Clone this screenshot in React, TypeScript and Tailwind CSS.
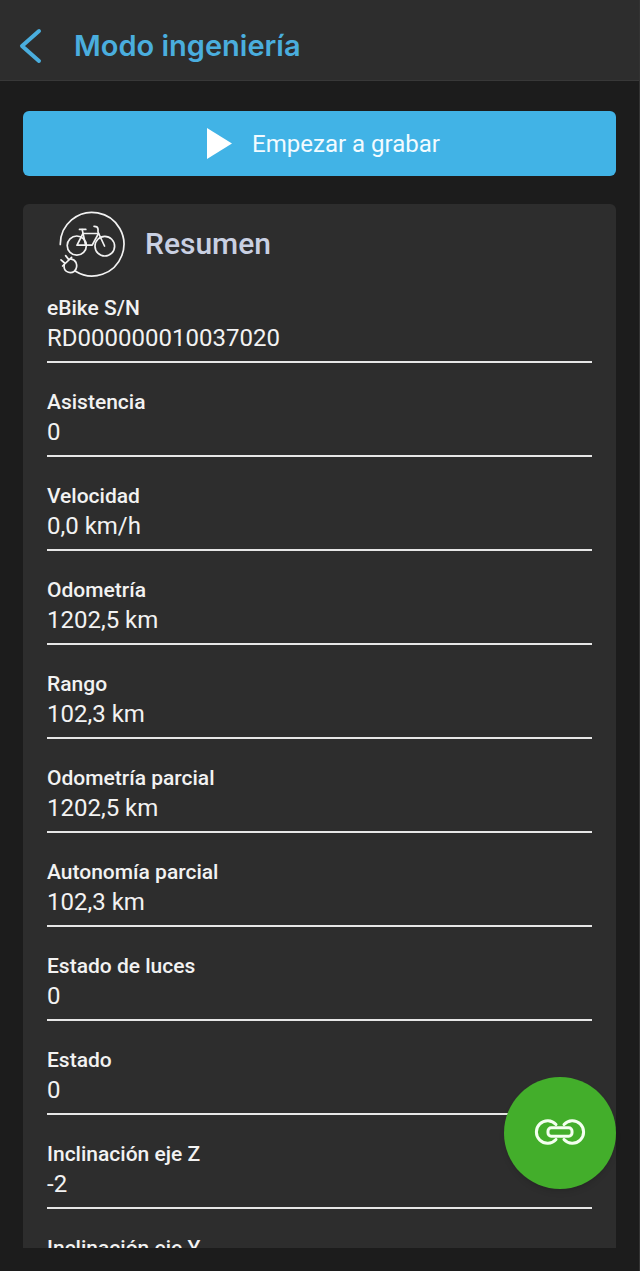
import { useState } from 'react'

interface Reading {
  label: string
  value?: string
}

const READINGS: Reading[] = [
  { label: 'eBike S/N', value: 'RD000000010037020' },
  { label: 'Asistencia', value: '0' },
  { label: 'Velocidad', value: '0,0 km/h' },
  { label: 'Odometría', value: '1202,5 km' },
  { label: 'Rango', value: '102,3 km' },
  { label: 'Odometría parcial', value: '1202,5 km' },
  { label: 'Autonomía parcial', value: '102,3 km' },
  { label: 'Estado de luces', value: '0' },
  { label: 'Estado', value: '0' },
  { label: 'Inclinación eje Z', value: '-2' },
  { label: 'Inclinación eje Y' },
]

function BackIcon() {
  return (
    <svg width="24" height="36" viewBox="0 0 24 36" fill="none" stroke="currentColor" strokeWidth="4" strokeLinecap="round" strokeLinejoin="round" aria-hidden="true">
      <path d="M21 3 L4 18 L21 33" />
    </svg>
  )
}

function BikeIcon() {
  return (
    <svg width="66" height="66" viewBox="9 6 66 66" fill="none" stroke="#f2f2f2" strokeWidth="1.7" strokeLinecap="round" strokeLinejoin="round" aria-hidden="true">
      {/* cable loop */}
      <path d="M10.3 39.5 A31.8 31.8 0 1 1 25.5 66.3" />
      {/* wheels */}
      <circle cx="26.8" cy="40.6" r="9.6" />
      <circle cx="54.8" cy="41.2" r="9.8" />
      {/* frame */}
      <path d="M27 40.2 L33 28.5 H48.5 L42.2 40.2 Z" />
      <path d="M29.5 24.4 H35.8" />
      <path d="M32.2 24.6 L35.6 40" />
      <path d="M44 21.3 Q47.8 21.2 48 24 L48 27 L54.5 41" />
      {/* plug */}
      <path d="M12.6 61 L21.6 52.4" />
      <path d="M14.2 59.8 Q13.5 64.2 16.5 66.4 Q20.5 69 24.4 66.2 Q28 62.5 26 57.5 Q24.4 54.4 20.5 53.8" />
      <path d="M11 54.8 L14.6 58" />
      <path d="M15.6 50.6 L18.6 54.4" />
    </svg>
  )
}

function LinkIcon() {
  return (
    <svg width="52" height="28" viewBox="-1 -1 52 28" fill="none" stroke="#f4fff0" strokeWidth="3" strokeLinecap="round" strokeLinejoin="round" aria-hidden="true">
      <path d="M21 4.6 A11.2 11.2 0 1 0 21 19.4" />
      <path d="M29 4.6 A11.2 11.2 0 1 1 29 19.4" />
      <rect x="13" y="7.8" width="24" height="8.4" rx="3.2" />
    </svg>
  )
}

export default function App() {
  const [recording, setRecording] = useState(false)

  return (
    <div className="flex h-screen flex-col border-r border-[#333333] bg-[#1c1c1c] text-[#f2f2f2]" style={{ fontFamily: 'Roboto, "Liberation Sans", sans-serif' }}>
      <header className="flex shrink-0 items-center gap-8 border-b border-[#383838] bg-[#2d2d2d] px-[18px] pt-4 pb-1 text-[#4aaede]">
        <button type="button" aria-label="Atrás" className="flex h-15 items-center">
          <BackIcon />
        </button>
        <h1 className="text-[29px] leading-10 font-semibold" style={{ fontFamily: 'Inter, "Liberation Sans", sans-serif' }}>Modo ingeniería</h1>
      </header>

      <main className="flex min-h-0 flex-1 flex-col gap-7 px-[23px] pt-[30px] pb-[23px]">
        <button
          type="button"
          aria-pressed={recording}
          onClick={() => setRecording(r => !r)}
          className="flex h-[65px] w-full shrink-0 items-center justify-center gap-5 rounded-md bg-[#41b3e6] pl-2 text-2xl text-[#f2fbff]"
        >
          <svg width="25" height="31" viewBox="0 0 25 31" fill="#ffffff" aria-hidden="true">
            <path d="M0 0 L25 15.5 L0 31 Z" />
          </svg>
          Empezar a grabar
        </button>

        <section className="min-h-0 flex-1 overflow-y-auto rounded-t-md bg-[#2d2d2d] px-6 pt-[7px] [scrollbar-width:none]">
          <div className="flex items-center gap-5 pl-3">
            <BikeIcon />
            <h2 className="text-[30px] leading-10 font-medium text-[#c9d0e2]">Resumen</h2>
          </div>
          <dl className="pt-4">
            {READINGS.map(r => (
              <div key={r.label} className="mb-6 border-b-2 border-[#e6e6e6] pb-2">
                <dt className="text-[21px] leading-[30px] font-medium">{r.label}</dt>
                <dd className="min-h-[30px] text-2xl leading-[30px]">{r.value}</dd>
              </div>
            ))}
          </dl>
        </section>
      </main>

      <button type="button" aria-label="Conectar" className="fixed right-6 bottom-[82px] flex size-28 items-center justify-center rounded-full bg-[#43ae2b] shadow-md">
        <LinkIcon />
      </button>
    </div>
  )
}
